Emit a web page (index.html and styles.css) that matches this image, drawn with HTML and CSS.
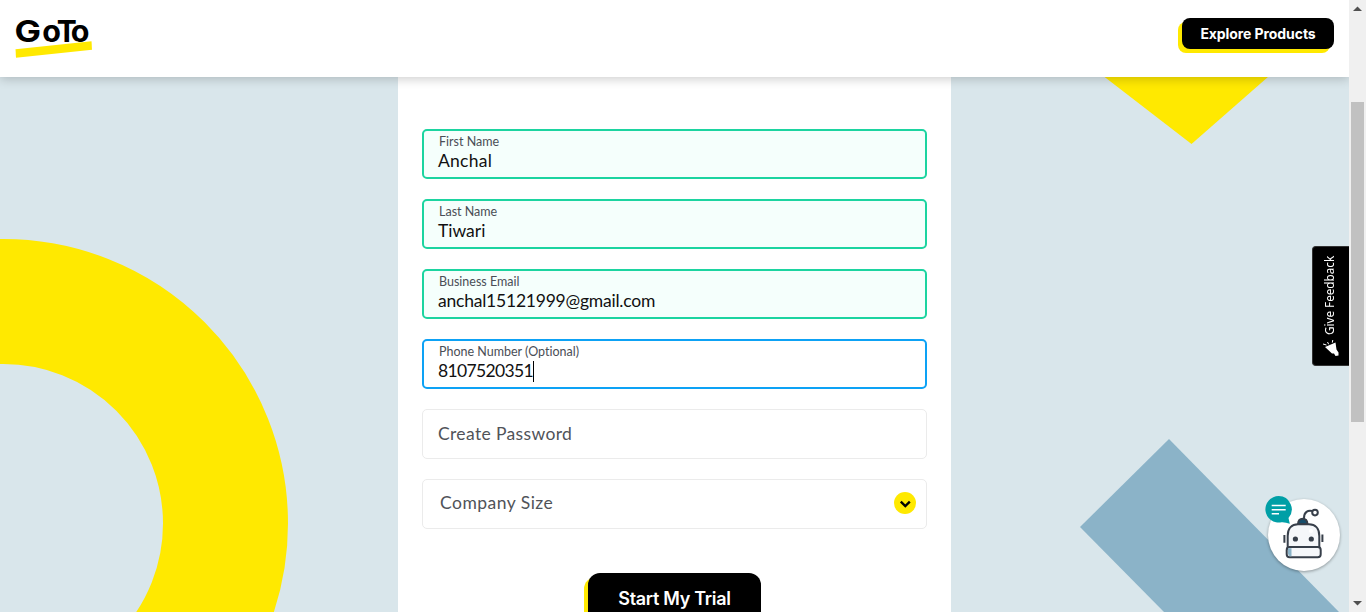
FILE: index.html
```html
<!DOCTYPE html>
<html lang="en">
<head>
<meta charset="utf-8">
<title>GoTo - Start My Trial</title>
<link rel="stylesheet" href="styles.css">
</head>
<body>
<div class="page">
  <div class="view">
    <svg class="backdrop" width="1349" height="612" viewBox="0 0 1349 612" aria-hidden="true">
      <circle cx="3.5" cy="523.5" r="222" fill="none" stroke="#ffe900" stroke-width="125"/>
      <path d="M1104 76.500H1268.500L1191.5 144Z" fill="#ffe900"/>
      <path d="M1169 439L1080 527L1164 612H1339Z" fill="#8bb3c8"/>
    </svg>
    <header class="header">
      <svg class="logo" width="80" height="44" viewBox="0 0 80 44" role="img" aria-label="GoTo">
        <path d="M2.500 33.300L78.500 25.300L79 33.700L3 41.700Z" fill="#ffe900"/>
        <g class="logo-text">
          <text transform="translate(1.500 26.300) scale(1.180 1)" font-size="30">G</text>
          <text y="26.300"><tspan x="29.300" font-size="30.500">o</tspan><tspan x="43.800" font-size="30">T</tspan><tspan x="57.700" font-size="30.500">o</tspan></text>
        </g>
      </svg>
      <a class="button explore">Explore Products</a>
    </header>
    <main class="card">
      <form class="form">
        <label class="field valid"><span class="caption first">First Name</span><span class="value anchal">Anchal</span></label>
        <label class="field valid"><span class="caption last">Last Name</span><span class="value tiwari">Tiwari</span></label>
        <label class="field valid"><span class="caption business">Business Email</span><span class="value email">anchal15121999@gmail.com</span></label>
        <label class="field focus"><span class="caption phone">Phone Number (Optional)</span><span class="value digits">8107520351<i class="caret"></i></span></label>
        <label class="field empty"><span class="placeholder">Create Password</span></label>
        <label class="field empty select"><span class="placeholder size">Company Size</span>
          <svg width="22" height="22" viewBox="0 0 22 22"><circle cx="11" cy="11" r="11" fill="#ffe900"/><path d="M6.800 9.700L11.300 14L15.800 9.700" fill="none" stroke="#000" stroke-width="2.400"/></svg>
        </label>
      </form>
      <a class="button trial">Start My Trial</a>
    </main>
    <aside class="feedback">
      <span class="feedback-text">Give Feedback</span>
      <svg width="17" height="17" viewBox="0 0 17 17"><path d="M2 7L12.500 2.500L13.500 9.500L15.500 12.500V15.500L12.500 16L11 13.500L9 13.500Z" fill="#fff"/><path d="M0 4L3.500 5M4.500 2L5.700 4.300M9.800 0L9.300 2.600" stroke="#fff" fill="none"/></svg>
    </aside>
    <svg class="chat" width="82" height="86" viewBox="0 0 82 86" aria-label="Chat">
      <circle class="disc" cx="42" cy="43" r="36" fill="#fff"/>
      <g stroke="#373f4a" stroke-width="2" fill="#f5f7fa">
        <path d="M42 27V26C42 20 46 18 50 19" fill="none"/>
        <circle cx="53" cy="20.600" r="2.800" fill="#fff"/>
        <path d="M36 32C36.500 25 45 25 45.500 32Z" fill="#174e6c"/>
        <path d="M25.700 56V44C25.700 36 30 32.300 36 32.300H47C53 32.300 57.300 36 57.300 44V56Z"/>
        <rect x="24.700" y="55" width="34" height="10.300" rx="3"/>
        <path d="M22.400 43V50.700M60.400 42.500V50"/>
      </g>
      <path d="M26 56.200H29.500V64.200H27.500L26 62Z" fill="#8bb3c8"/>
      <circle cx="33.400" cy="47" r="2.600" fill="#373f4a"/>
      <circle cx="49.300" cy="47" r="2.600" fill="#373f4a"/>
      <circle cx="49" cy="39" r="2" fill="#fff"/>
      <path d="M16.700 4A13.300 13.300 0 1 0 19.500 30.300C22 30 25 31 27.800 31.800L26.500 26A13.300 13.300 0 0 0 16.700 4Z" fill="#009fa6"/>
      <path d="M9.700 13.500H23.700M9.700 17.700H23.700M9.700 21.700H17" stroke="#fff" stroke-width="1.500"/>
    </svg>
  </div>
  <div class="scrollbar">
    <svg width="17" height="17"><path d="M4 11L8.500 6.500L13 11Z" fill="#505050"/></svg>
    <div class="thumb"></div>
    <svg class="down" width="17" height="17"><path d="M4 6L8.500 10.500L13 6Z" fill="#505050"/></svg>
  </div>
</div>
</body>
</html>
```
FILE: styles.css
```css
* { box-sizing: border-box; }
body { margin: 0; font-family: Lato, "Liberation Sans", sans-serif; overflow: hidden; }
.page { display: flex; width: 1366px; height: 612px; overflow: hidden; }
.view { position: relative; width: 1349px; height: 612px; overflow: hidden; background: #d9e6eb; }
.backdrop { position: absolute; inset: 0; }
.header { position: relative; z-index: 2; display: flex; justify-content: space-between; align-items: flex-start; height: 77px; padding: 16px 15px 0 13px; background: #fff; box-shadow: 0 2px 10px rgba(0, 0, 0, .2); }
.logo { display: block; overflow: visible; }
.logo-text { font-family: Inter, sans-serif; font-weight: 700; }
.button { display: block; background: #000; color: #fff; text-align: center; white-space: nowrap; box-shadow: -4px 4px 0 #ffe900; }
.explore { width: 152px; height: 31px; margin-top: 2px; border-radius: 8px; font: 700 14px/32px Inter, sans-serif; letter-spacing: -.08px; }
.card { position: relative; width: 553px; height: 535px; margin-left: 398px; padding: 52px 24px 0; background: #fff; }
.form { display: flex; flex-direction: column; gap: 20px; }
.field { display: block; height: 50px; border: 2px solid #1cd4a0; border-radius: 5px; padding: 2px 14px 0; background: #f5fffc; white-space: nowrap; font-variant-ligatures: none; }
.caption { display: block; padding-left: 1px; font-size: 12.5px; line-height: 17px; color: #4a4e56; }
.value { display: flex; font-size: 17.5px; line-height: 22px; color: #111; }
.anchal { letter-spacing: .25px; }
.email { letter-spacing: -.22px; }
.digits { letter-spacing: -.65px; }
.focus { border-color: #0da2f5; background: #fff; }
.caret { width: 1px; height: 21px; margin: 1px 0 0 -.5px; background: #000; }
.empty { display: flex; align-items: center; justify-content: space-between; border: 1px solid #ebebeb; background: #fff; padding: 0 10px 2px 15px; }
.placeholder { font-size: 17.5px; letter-spacing: .36px; color: #505359; }
.size { padding: 0 0 1px 2px; letter-spacing: .48px; }
.trial { width: 173px; height: 51px; margin: 44px 0 0 166px; border-radius: 12px; font: 600 18px/52px Inter, sans-serif; letter-spacing: -.3px; }
.feedback { position: absolute; left: 1312px; top: 246px; width: 37px; height: 120px; padding: 8px 0 0 9px; border: 1px solid #333; border-right: 0; border-radius: 4px 0 0 4px; background: #000; color: #fff; }
.feedback-text { display: block; height: 80px; writing-mode: vertical-rl; transform: rotate(180deg); font: 11.7px/15px "Noto Sans", sans-serif; white-space: nowrap; }
.feedback svg { display: block; margin: 5px 0 0 1px; }
.chat { position: absolute; left: 1262px; top: 492px; }
.disc { filter: drop-shadow(0 1px 1.5px rgba(0, 0, 0, .35)); }
.scrollbar { display: flex; flex-direction: column; width: 17px; height: 612px; background: #f0f0f0; }
.scrollbar svg { display: block; }
.thumb { width: 13px; height: 320px; margin: 85px 0 0 2px; background: #c1c1c1; }
.down { margin-top: auto; }
```
